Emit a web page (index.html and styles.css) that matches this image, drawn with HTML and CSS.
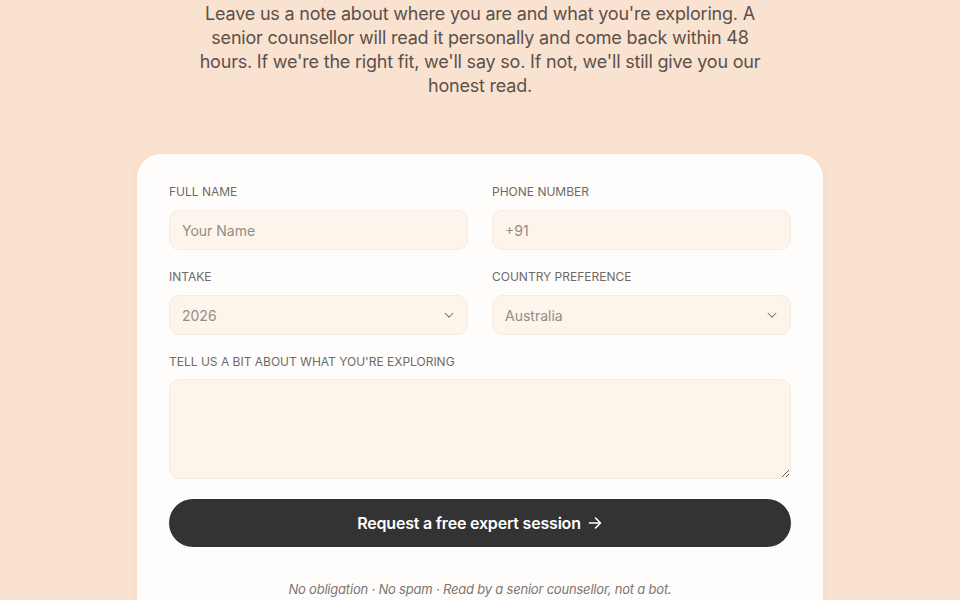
FILE: index.html
```html
<!DOCTYPE html>
<html lang="en">
<head>
  <meta charset="UTF-8">
  <meta name="viewport" content="width=device-width, initial-scale=1.0">
  <title>Talk to a counsellor</title>
  <link rel="stylesheet" href="styles.css">
</head>
<body>
  <section class="contact">
    <p class="intro">Leave us a note about where you are and what you're exploring. A senior counsellor will read it personally and come back within 48 hours. If we're the right fit, we'll say so. If not, we'll still give you our honest read.</p>

    <form class="card" id="lead-form">
      <div class="row">
        <div class="field">
          <label for="name">Full Name</label>
          <input type="text" id="name" name="name" placeholder="Your Name">
        </div>
        <div class="field">
          <label for="phone">Phone Number</label>
          <input type="text" id="phone" name="phone" placeholder="+91">
        </div>
      </div>

      <div class="row">
        <div class="field">
          <label for="intake">Intake</label>
          <div class="select-wrap">
            <select id="intake" name="intake">
              <option>2026</option>
              <option>2027</option>
            </select>
            <svg class="chevron" viewBox="0 0 16 16" width="14" height="14"><path d="M3.5 6l4.5 4.5L12.5 6" fill="none" stroke="#7a746f" stroke-width="1.2" stroke-linecap="round" stroke-linejoin="round"/></svg>
          </div>
        </div>
        <div class="field">
          <label for="country">Country Preference</label>
          <div class="select-wrap">
            <select id="country" name="country">
              <option>Australia</option>
              <option>Canada</option>
              <option>United Kingdom</option>
            </select>
            <svg class="chevron" viewBox="0 0 16 16" width="14" height="14"><path d="M3.5 6l4.5 4.5L12.5 6" fill="none" stroke="#7a746f" stroke-width="1.2" stroke-linecap="round" stroke-linejoin="round"/></svg>
          </div>
        </div>
      </div>

      <div class="field field-note">
        <label for="note">Tell us a bit about what you're exploring</label>
        <textarea id="note" name="note"></textarea>
      </div>

      <button type="submit">Request a free expert session
        <svg viewBox="0 0 16 16" width="16" height="16"><path d="M2.5 8h11M8.5 3l5 5-5 5" fill="none" stroke="#fff" stroke-width="1.6" stroke-linecap="round" stroke-linejoin="round"/></svg>
      </button>

      <p class="fineprint">No obligation · No spam · Read by a senior counsellor, not a bot.</p>
    </form>
  </section>
</body>
</html>
```

FILE: styles.css
```css
body {
  margin: 0;
  background-color: #f9e2cf;
  font-family: 'Inter', 'Liberation Sans', sans-serif;
  color: #333;
}

.contact {
  padding-top: 2px;
}

.intro {
  max-width: 572px;
  margin: 0 auto;
  text-align: center;
  font-size: 18px;
  line-height: 24px;
  letter-spacing: -0.2px;
  color: #5b514b;
}

.card {
  width: 622px;
  margin: 56px auto 0;
  background: #fffdfb;
  padding: 30px 32px 40px;
  border-radius: 24px;
  box-shadow: 0 2px 10px rgba(160, 110, 70, 0.06);
}

.row {
  display: grid;
  grid-template-columns: 1fr 1fr;
  gap: 24px;
}

.field {
  margin-bottom: 19px;
}

.field-note label {
  margin-bottom: 9px;
}

.field-note {
  margin-bottom: 20px;
}

label {
  display: block;
  font-size: 12px;
  line-height: 16px;
  text-transform: uppercase;
  color: #6e6a67;
  margin-bottom: 10px;
}

input[type="text"], select, textarea {
  display: block;
  width: 100%;
  box-sizing: border-box;
  height: 40px;
  padding: 0 12px;
  background: #fdf5ec;
  border: 1px solid #f5ebe1;
  border-radius: 10px;
  font-family: 'Inter', 'Liberation Sans', sans-serif;
  font-size: 14px;
  color: #958c85;
  outline: none;
}

input::placeholder {
  color: #958c85;
}

.select-wrap {
  position: relative;
}

select {
  appearance: none;
  -webkit-appearance: none;
}

.chevron {
  position: absolute;
  right: 12px;
  top: 13px;
  pointer-events: none;
}

textarea {
  height: 100px;
  padding: 12px;
  resize: vertical;
}

button {
  display: flex;
  align-items: center;
  justify-content: center;
  gap: 6px;
  width: 100%;
  height: 48px;
  background-color: #333;
  color: #fff;
  border: none;
  border-radius: 24px;
  font-family: 'Inter', 'Liberation Sans', sans-serif;
  font-size: 16px;
  font-weight: 600;
  letter-spacing: -0.2px;
  cursor: pointer;
}

.fineprint {
  margin: 34px 0 0;
  text-align: center;
  font-size: 13px;
  font-style: italic;
  letter-spacing: -0.2px;
  color: #7d7571;
}
```
